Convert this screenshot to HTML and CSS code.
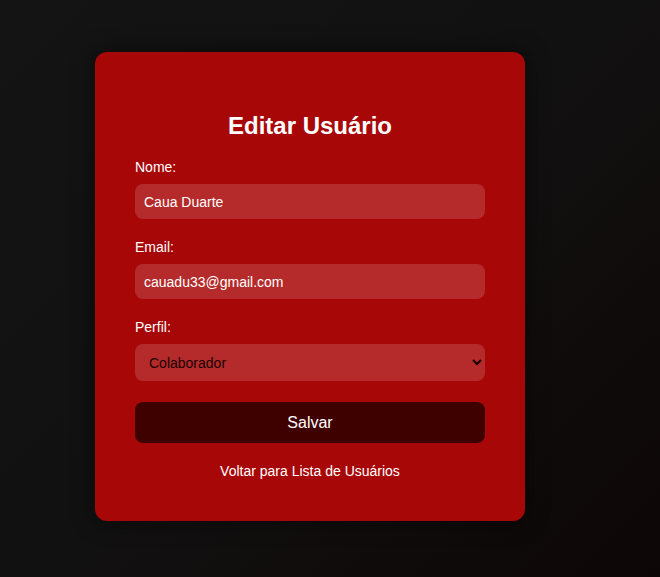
FILE: index.html
```html
<!DOCTYPE html>
<html lang="pt-BR">
<head>
<meta charset="utf-8">
<title>Editar Usuário</title>
<link rel="stylesheet" href="styles.css">
</head>
<body>
  <main class="card">
    <h2 class="title">Editar Usuário</h2>
    <form class="form">
      <label class="label" for="nome">Nome:</label>
      <input class="field" id="nome" type="text" value="Caua Duarte">
      <label class="label" for="email">Email:</label>
      <input class="field" id="email" type="email" value="cauadu33@gmail.com">
      <label class="label" for="perfil">Perfil:</label>
      <select class="field select" id="perfil">
        <option>Colaborador</option>
        <option>Administrador</option>
      </select>
      <button class="btn" type="button">Salvar</button>
    </form>
    <a class="back" href="#">Voltar para Lista de Usuários</a>
  </main>
</body>
</html>
```
FILE: styles.css
```css
html, body {
  height: 100%;
}
body {
  margin: 0;
  background: linear-gradient(135deg, #151414 0%, #121111 50%, #0d0606 100%);
  font-family: "Liberation Sans", Arial, sans-serif;
  color: #fff;
  overflow: hidden;
}
.card {
  box-sizing: border-box;
  width: 430px;
  margin: 52px 0 0 95px;
  padding: 40px 40px 42px;
  background: #a80707;
  border-radius: 12px;
  box-shadow: 0 0 22px rgba(0, 0, 0, 0.55);
  display: flex;
  flex-direction: column;
}
.title {
  margin: 20px 0 20px;
  font-size: 24px;
  font-weight: bold;
  text-align: center;
  line-height: 27px;
}
.form {
  display: flex;
  flex-direction: column;
}
.label {
  font-size: 14px;
  line-height: 16px;
  margin-bottom: 9px;
}
.field {
  box-sizing: border-box;
  width: 100%;
  height: 35px;
  margin: 0 0 20px;
  padding: 0 9px;
  border: none;
  border-radius: 8px;
  background: rgba(255, 255, 255, 0.15);
  color: #fff;
  font-family: "Liberation Sans", Arial, sans-serif;
  font-size: 14px;
  outline: none;
}
.select {
  height: 37px;
  margin-bottom: 21px;
  padding: 0 6px 0 10px;
  color: #1a0000;
}
.btn {
  height: 41px;
  border: none;
  border-radius: 8px;
  background: #3f0000;
  color: #fff;
  font-family: "Liberation Sans", Arial, sans-serif;
  font-size: 16px;
  cursor: pointer;
}
.back {
  margin-top: 20px;
  align-self: center;
  color: #fff;
  text-decoration: none;
  font-size: 14px;
  line-height: 16px;
}
```
